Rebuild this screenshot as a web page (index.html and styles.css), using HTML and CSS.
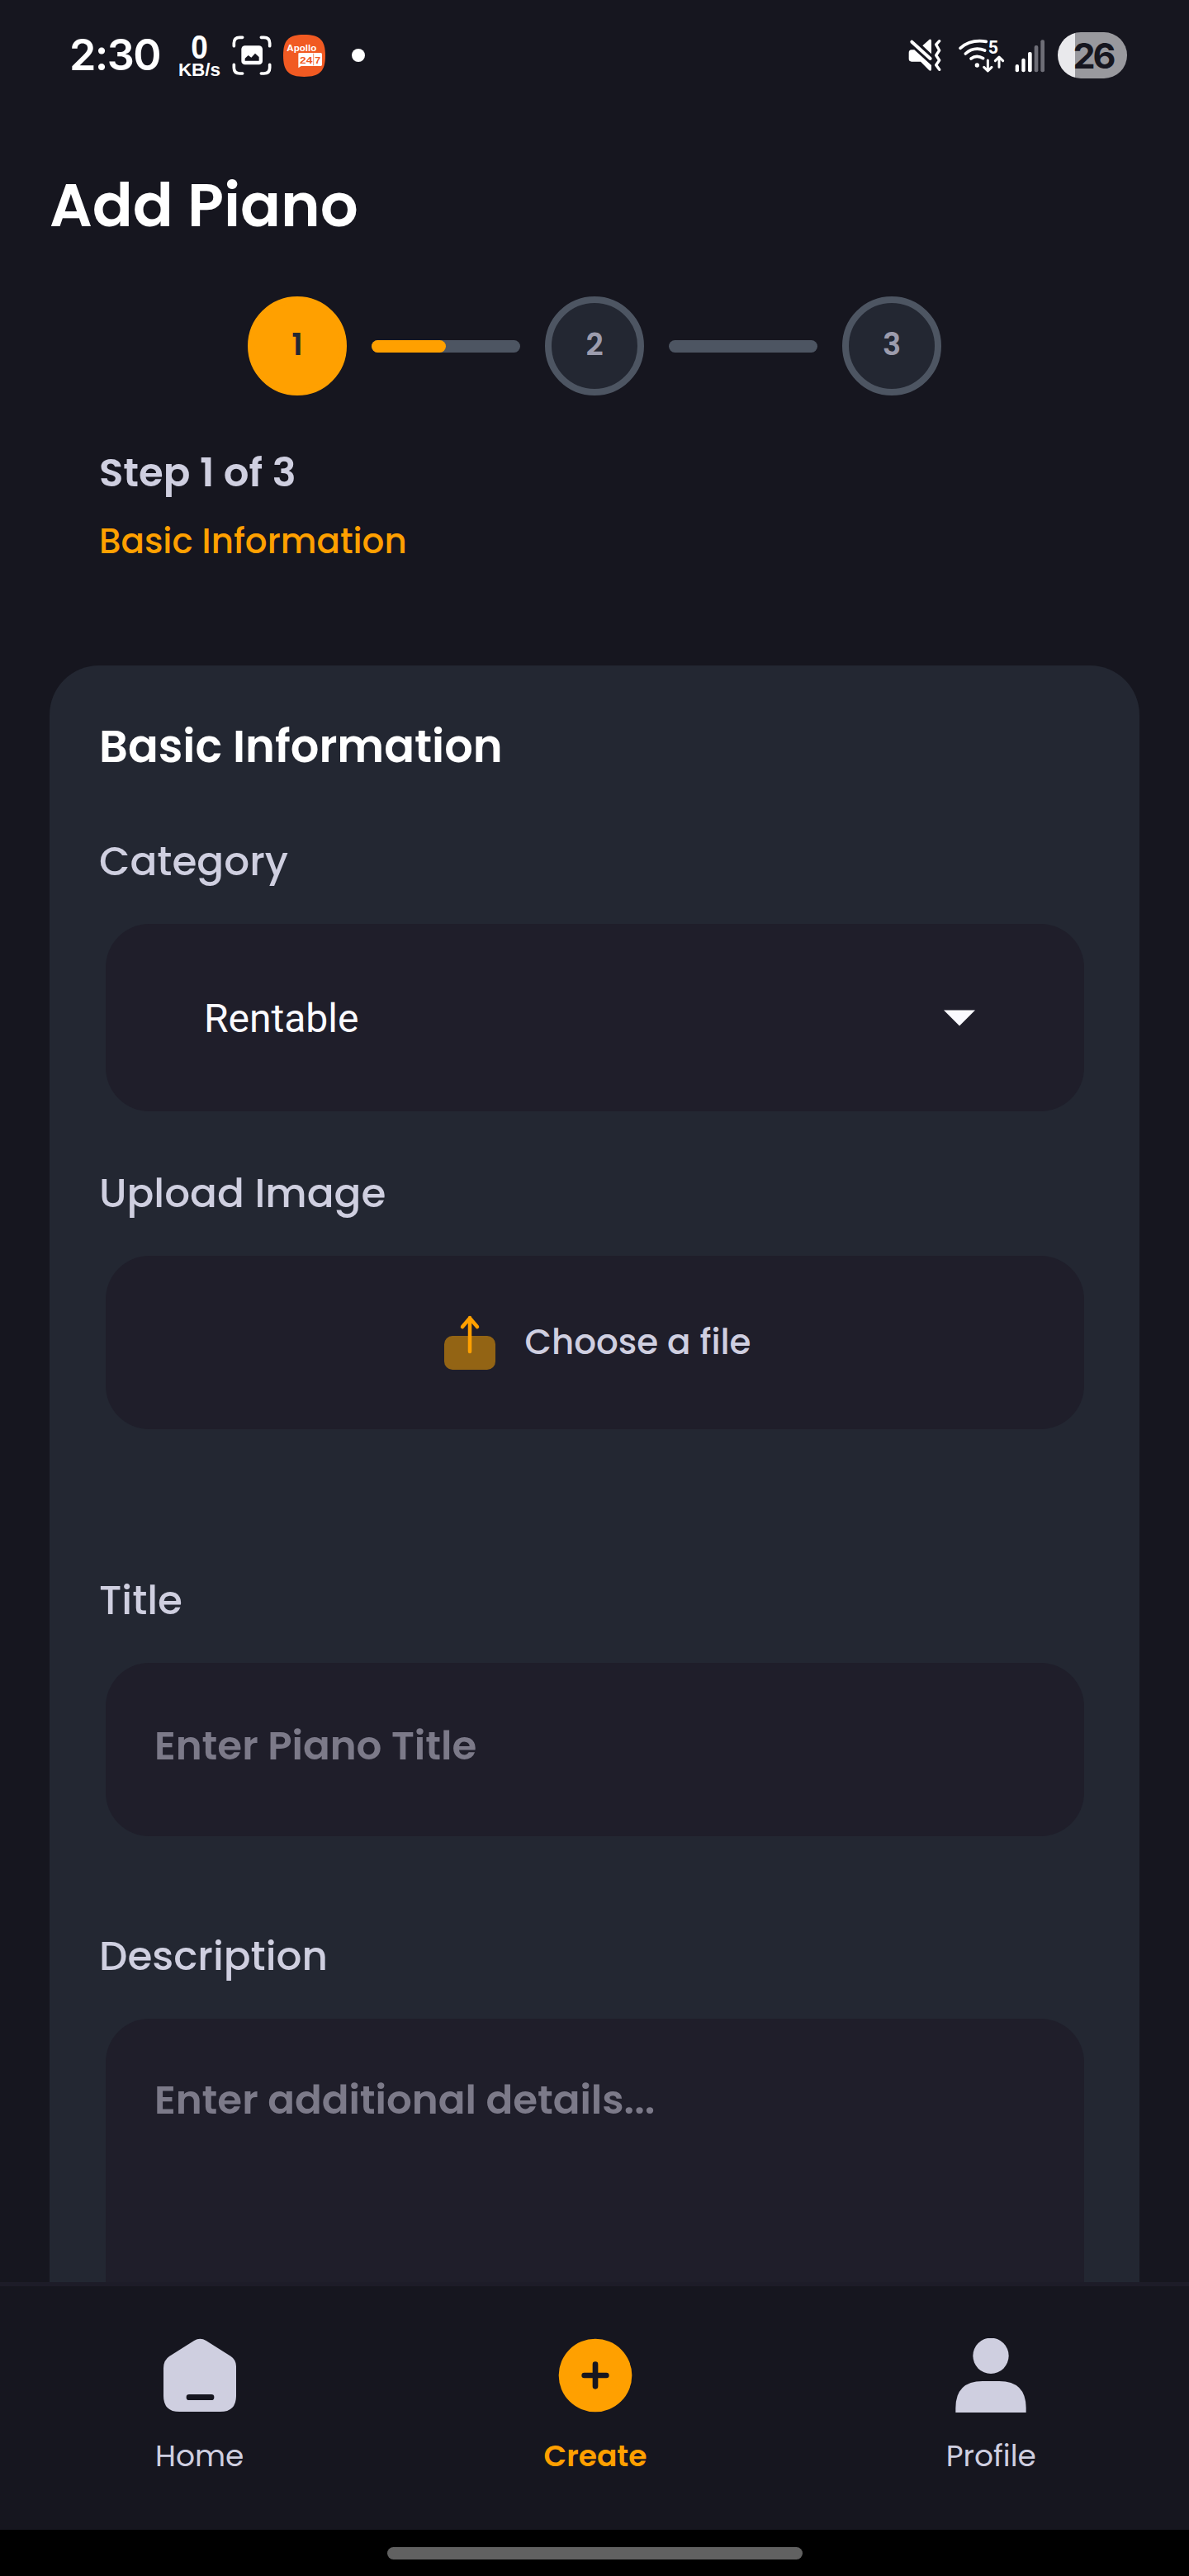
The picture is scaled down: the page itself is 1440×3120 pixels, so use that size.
FILE: index.html
```html
<!DOCTYPE html>
<html lang="en">
<head>
<meta charset="utf-8">
<title>Add Piano</title>
<link rel="stylesheet" href="styles.css">
</head>
<body>
<div class="screen">
  <div class="status">
    <span class="clock">2:30</span>
    <span class="net"><b class="net-value">0</b><b class="net-unit">KB/s</b></span>
    <svg class="capture" width="48" height="48" viewBox="664 70 144 144" fill="none">
      <path d="M671 108V98Q671 77 692 77H702M770 77H780Q801 77 801 98V108M801 176V187Q801 208 780 208H770M702 208H692Q671 208 671 187V176" stroke="#fff" stroke-width="11" stroke-linecap="round"/>
      <rect x="698" y="107" width="77" height="69" rx="13" fill="#fff"/>
      <path d="M711 162V153L723 142L734 150L748 135L762 148V162Z" fill="#16161f"/>
    </svg>
    <svg class="apollo" width="51" height="51" viewBox="849 66 153 153">
      <path d="M925 66C982 66 1002 86 1002 142S982 219 925 219S849 198 849 142S868 66 925 66Z" fill="#f15a22"/>
      <text class="apollo-name" x="862" y="127" textLength="108" lengthAdjust="spacingAndGlyphs">Apollo</text>
      <path d="M906 132H985Q990 132 990 137V175Q990 180 985 180H914L904 187V134Z" fill="#fff"/>
      <path d="M959 134V178" stroke="#f15a22" stroke-width="2"/>
      <text class="apollo-num" x="909" y="170" textLength="46" lengthAdjust="spacingAndGlyphs">24</text>
      <text class="apollo-num" x="964" y="170" textLength="21" lengthAdjust="spacingAndGlyphs">7</text>
    </svg>
    <span class="dot"></span>
    <svg class="mute" width="40" height="40" viewBox="60 82 120 120" fill="none">
      <path d="M112 107L137 84Q144 82 144 90V137Z" fill="#fff"/>
      <path d="M72 122H82L144 178V192Q144 201 136 197L105 165H72Q62 165 62 155V133Q62 122 72 122Z" fill="#fff"/>
      <path d="M73 93L140 154" stroke="#fff" stroke-width="12" stroke-linecap="round"/>
      <path d="M173 90L161 103L173 124L161 142L173 160L161 177L173 194" stroke="#fff" stroke-width="10" stroke-linecap="round" stroke-linejoin="round"/>
    </svg>
    <svg class="wifi" width="57" height="44" viewBox="240 79 171 132" fill="none" stroke="#fff" stroke-width="11" stroke-linecap="round" stroke-linejoin="round">
      <path d="M249 119Q286 86 343 95"/>
      <path d="M268 139Q298 112 338 127"/>
      <path d="M288 157Q308 142 332 156"/>
      <circle cx="310" cy="181" r="8" fill="#fff" stroke="none"/>
      <path d="M349 163V200M335 188L349 202L363 188" stroke-width="9"/>
      <path d="M390 188V152M376 165L390 151L404 165" stroke-width="9"/>
      <text class="wifi-gen" x="350" y="138">5</text>
    </svg>
    <svg class="signal" width="37" height="41" viewBox="447 79 111 123" fill="#fff">
      <rect x="449" y="172" width="13" height="28" rx="6"/>
      <rect x="472" y="150" width="13" height="50" rx="6"/>
      <rect x="495" y="127" width="14" height="73" rx="6"/>
      <rect x="518" y="103" width="14" height="97" rx="6" fill="#6e6e77"/>
      <rect x="541" y="83" width="14" height="117" rx="6" fill="#6e6e77"/>
    </svg>
    <span class="battery">26</span>
  </div>

  <h1 class="title">Add Piano</h1>

  <div class="steps">
    <span class="step step-active">1</span>
    <span class="bar"><span class="bar-fill"></span></span>
    <span class="step">2</span>
    <span class="bar"></span>
    <span class="step">3</span>
  </div>
  <p class="step-label">Step 1 of 3</p>
  <p class="step-name">Basic Information</p>

  <main class="card">
    <h2 class="card-title">Basic Information</h2>

    <label class="label">Category</label>
    <div class="box box-select">
      <span>Rentable</span>
      <svg width="38" height="20" viewBox="0 0 38 20"><path d="M0 0.5H38L19 19.5Z" fill="#fafaff"/></svg>
    </div>

    <label class="label">Upload Image</label>
    <div class="box box-upload">
      <svg width="72" height="72" viewBox="0 0 72 72" fill="none">
        <rect x="5" y="28" width="62" height="41" rx="10" fill="#936414"/>
        <path d="M36 47V6M27 17L36 6.500L45 17" stroke="#ffa000" stroke-width="4.500" stroke-linecap="round" stroke-linejoin="round"/>
      </svg>
      <span>Choose a file</span>
    </div>

    <label class="label">Title</label>
    <div class="box box-input">Enter Piano Title</div>

    <label class="label">Description</label>
    <div class="box box-area">Enter additional details...</div>
  </main>

  <nav class="nav">
    <a class="tab">
      <svg width="88" height="90" viewBox="294 276 264 270">
        <path d="M405 285Q427 272 449 285L538 341Q558 354 558 378V485Q558 543 500 543H352Q294 543 294 485V385Q294 355 316 341Z" fill="#cfcfe0"/>
        <rect x="377" y="480" width="101" height="21" rx="10" fill="#16161f"/>
      </svg>
      <span>Home</span>
    </a>
    <a class="tab tab-active">
      <svg width="90" height="90" viewBox="350 276 270 270">
        <circle cx="485" cy="411" r="133" fill="#ffa000"/>
        <path d="M485 371V451M445 411H525" stroke="#16161f" stroke-width="20" stroke-linecap="round"/>
      </svg>
      <span>Create</span>
    </a>
    <a class="tab">
      <svg width="86" height="90" viewBox="354 276 258 270" fill="#cfcfe0">
        <circle cx="483" cy="340" r="65"/>
        <path d="M355 546V530Q355 432 453 432H513Q611 432 611 530V546Z"/>
      </svg>
      <span>Profile</span>
    </a>
  </nav>
  <div class="gesture"><span class="handle"></span></div>
</div>
</body>
</html>
```
FILE: styles.css
```css
* { box-sizing: border-box; }

body {
  margin: 0;
  background: #16161f;
  font-family: Poppins, Inter, sans-serif;
}

.screen {
  display: flex;
  flex-direction: column;
  width: 1440px;
  height: 3120px;
  overflow: hidden;
}

/* Status bar */
.status {
  display: flex;
  align-items: center;
  flex: none;
  height: 134px;
  padding: 0 75px 0 84px;
  color: #fff;
}
.clock {
  width: 132px;
  font: 600 52px/60px Inter, sans-serif;
  letter-spacing: -1.6px;
}
.net {
  display: flex;
  flex-direction: column;
  align-items: center;
  gap: 5px;
  width: 51px;
  font-family: "Liberation Sans", sans-serif;
}
.net-value { font-size: 41px; line-height: 30px; transform: scaleX(0.9); }
.net-unit { font-size: 22.5px; line-height: 15px; }
.capture { margin-left: 14px; }
.apollo { margin-left: 14px; }
.apollo-name, .apollo-num { font: bold 34px "Liberation Sans", sans-serif; fill: #fff; }
.apollo-num { fill: #f15a22; }
.dot {
  width: 16px;
  height: 16px;
  margin-left: 32px;
  border-radius: 50%;
  background: #fff;
}
.mute { margin-left: auto; }
.wifi { margin-left: 20px; }
.wifi-gen { font: bold 64px Roboto, sans-serif; fill: #fff; stroke: none; }
.signal { margin-left: 12px; }
.battery {
  width: 84px;
  height: 56px;
  margin-left: 15px;
  padding-left: 2px;
  border-radius: 28px;
  background: linear-gradient(90deg, #e9e9ec 21px, #99999e 21px);
  color: #16161f;
  font: 700 43px/57px Inter, sans-serif;
  letter-spacing: -3px;
  text-align: center;
}

/* Page header */
.title {
  margin: 75px 60px 0;
  color: #fff;
  font-size: 72.3px;
  font-weight: 600;
  line-height: 80px;
}
.steps {
  display: flex;
  align-items: center;
  justify-content: center;
  gap: 30px;
  margin-top: 70px;
}
.step {
  width: 120px;
  height: 120px;
  border: 8px solid #4d5562;
  border-radius: 50%;
  background: #232732;
  color: #9c9cad;
  font-size: 37px;
  font-weight: 600;
  line-height: 101px;
  text-align: center;
}
.step-active {
  border-color: #ffa000;
  background: #ffa000;
  color: #232732;
}
.bar {
  width: 180px;
  height: 15px;
  border-radius: 8px;
  background: #4d5562;
}
.bar-fill {
  display: block;
  width: 50%;
  height: 100%;
  border-radius: 8px;
  background: #ffa000;
}
.step-label {
  margin: 63px 120px 0;
  color: #cfcfe0;
  font-size: 48.2px;
  font-weight: 600;
  line-height: 60px;
}
.step-name {
  margin: 24px 120px 0;
  color: #ffa000;
  font-size: 42px;
  font-weight: 500;
  line-height: 60px;
}

/* Form card */
.card {
  display: flex;
  flex-direction: column;
  flex: 1;
  min-height: 0;
  overflow: hidden;
  margin: 120px 60px 0;
  padding: 63px 60px 0;
  border-radius: 60px 60px 0 0;
  background: #232732;
}
.card-title {
  flex: none;
  margin: 0 0 74px;
  color: #fff;
  font-size: 54.3px;
  font-weight: 600;
  line-height: 70px;
}
.label {
  flex: none;
  margin-bottom: 46px;
  color: #cfcfe0;
  font-size: 48.5px;
  font-weight: 500;
  line-height: 60px;
}
.box {
  display: flex;
  align-items: center;
  flex: none;
  height: 210px;
  margin: 0 7px 69px 8px;
  border-radius: 53px;
  background: #1f1e2a;
  font-size: 48px;
  line-height: 60px;
}
.box-select {
  justify-content: space-between;
  height: 227px;
  padding: 0 132px 0 119px;
  color: #fafaff;
  font-family: Roboto, sans-serif;
}
.box-select span { padding-top: 3px; }
.box-upload {
  justify-content: center;
  gap: 30px;
  margin-bottom: 177px;
  padding-left: 2px;
  color: #cfcfe0;
  font-size: 42px;
  font-weight: 500;
}
.box-input, .box-area {
  align-items: flex-start;
  padding: 70px 59px 0;
  color: #7c7a89;
  font-size: 48.3px;
  font-weight: 600;
}
.box-input { margin-bottom: 115px; }
.box-area { height: 450px; padding-top: 68px; }

/* Bottom navigation */
.nav {
  display: grid;
  grid-template-columns: repeat(3, 1fr);
  flex: none;
  height: 300px;
  padding: 63px 0 0 2px;
  border-top: 5px solid #1d1c28;
  color: #cfcfe0;
}
.tab {
  display: flex;
  flex-direction: column;
  align-items: center;
  gap: 26px;
  font-size: 36px;
  line-height: 54px;
}
.tab-active { color: #ffa000; font-weight: 600; }
.gesture {
  flex: none;
  height: 56px;
  padding-top: 21px;
  background: #000;
}
.handle {
  display: block;
  width: 503px;
  height: 15px;
  margin: 0 auto;
  border-radius: 8px;
  background: #616161;
}
```
